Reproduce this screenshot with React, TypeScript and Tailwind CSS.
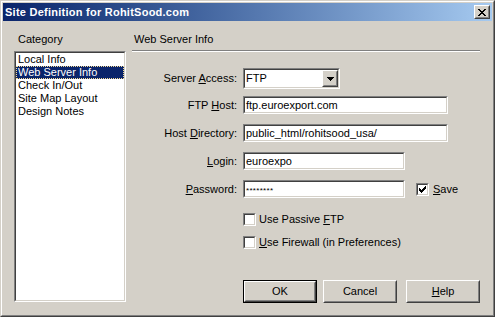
import React from "react";

const px = (rows: string[], color = "#000") =>
  rows.flatMap((row, y) =>
    row.split("").map((c, x) =>
      c === "x" ? <rect key={`${x}-${y}`} x={x} y={y} width={1} height={1} fill={color} /> : null
    )
  );

function CloseGlyph() {
  return (
    <svg width="8" height="7" shapeRendering="crispEdges">
      {px(["xx....xx", ".xx..xx.", "..xxxx..", "...xx...", "..xxxx..", ".xx..xx.", "xx....xx"])}
    </svg>
  );
}

function ArrowGlyph() {
  return (
    <svg width="7" height="4" shapeRendering="crispEdges">
      {px(["xxxxxxx", ".xxxxx.", "..xxx..", "...x..."])}
    </svg>
  );
}

function CheckGlyph() {
  return (
    <svg width="7" height="7" shapeRendering="crispEdges">
      {px(["......x", ".....xx", "x...xxx", "xx.xxx.", "xxxxx..", ".xxx...", "..x...."])}
    </svg>
  );
}

function Sunken({ className, children }: { className: string; children?: React.ReactNode }) {
  return (
    <div className={`border border-t-[#808080] border-l-[#808080] border-b-white border-r-white ${className}`}>
      <div className="h-full border border-t-[#404040] border-l-[#404040] border-b-[#d4d0c8] border-r-[#d4d0c8] bg-white">
        {children}
      </div>
    </div>
  );
}

function Raised({ className, children }: { className: string; children?: React.ReactNode }) {
  return (
    <div className={`border border-t-white border-l-white border-b-[#404040] border-r-[#404040] ${className}`}>
      <div className="h-full flex items-center justify-center border border-t-[#d4d0c8] border-l-[#d4d0c8] border-b-[#808080] border-r-[#808080] bg-[#d4d0c8]">
        {children}
      </div>
    </div>
  );
}

function TextField({ width, value, textClass = "" }: { width: string; value: string; textClass?: string }) {
  return (
    <Sunken className={`${width} h-[18px]`}>
      <div className={`h-full flex items-center pl-px whitespace-nowrap ${textClass}`}>{value}</div>
    </Sunken>
  );
}

function Checkbox({ checked }: { checked?: boolean }) {
  return (
    <Sunken className="w-[13px] h-[13px] shrink-0">
      <div className="h-full flex items-center justify-center">{checked && <CheckGlyph />}</div>
    </Sunken>
  );
}

function Label({ children }: { children: React.ReactNode }) {
  return <div className="w-[105px] shrink-0 text-right mr-[6px] whitespace-nowrap">{children}</div>;
}

const categories = ["Local Info", "Web Server Info", "Check In/Out", "Site Map Layout", "Design Notes"];

export default function App() {
  return (
    <div className="w-[495px] h-[317px] bg-[#d4d0c8] border border-t-[#d4d0c8] border-l-[#d4d0c8] border-r-[#404040] border-b-[#404040] font-['Liberation_Sans',Arial,sans-serif] text-[11px] leading-[13px] text-black select-none">
      <div className="h-full flex flex-col border border-t-white border-l-white border-r-[#808080] border-b-[#808080] p-px">
        {/* title bar */}
        <div className="h-[18px] shrink-0 flex items-center justify-between pl-[2px] pr-[2px] bg-gradient-to-r from-[#0a246a] to-[#a6caf0]">
          <span className="text-white font-bold tracking-[0.25px] whitespace-nowrap">Site Definition for RohitSood.com</span>
          <Raised className="w-[16px] h-[14px]">
            <CloseGlyph />
          </Raised>
        </div>

        <div className="flex-1 flex">
          {/* category list */}
          <div className="ml-[11px] w-[112px] pt-[12px] flex flex-col">
            <div className="pl-[4px]">Category</div>
            <Sunken className="mt-[5px] h-[251px]">
              <div className="flex flex-col">
                {categories.map((c) =>
                  c === "Web Server Info" ? (
                    <div key={c} className="h-[13px] pl-px bg-[#0a246a] text-white border border-dotted border-[#f5db95] leading-[11px] whitespace-nowrap">
                      {c}
                    </div>
                  ) : (
                    <div key={c} className="h-[13px] pl-[2px] whitespace-nowrap">
                      {c}
                    </div>
                  )
                )}
              </div>
            </Sunken>
          </div>

          {/* settings */}
          <div className="ml-[6px] w-[348px] pt-[12px] flex flex-col">
            <div className="pl-[2px]">Web Server Info</div>
            <div className="mt-[4px] border-t border-b border-t-[#808080] border-b-white" />

            <div className="mt-[16px] flex items-center">
              <Label>
                Server <u>A</u>ccess:
              </Label>
              <Sunken className="w-[97px] h-[21px]">
                <div className="h-full flex items-center justify-between">
                  <span className="pl-px">FTP</span>
                  <Raised className="w-[16px] h-full">
                    <ArrowGlyph />
                  </Raised>
                </div>
              </Sunken>
            </div>

            <div className="mt-[7px] flex items-center">
              <Label>
                FTP <u>H</u>ost:
              </Label>
              <TextField width="w-[205px]" value="ftp.euroexport.com" />
            </div>

            <div className="mt-[10px] flex items-center">
              <Label>
                Host <u>D</u>irectory:
              </Label>
              <TextField width="w-[205px]" value="public_html/rohitsood_usa/" />
            </div>

            <div className="mt-[10px] flex items-center">
              <Label>
                <u>L</u>ogin:
              </Label>
              <TextField width="w-[162px]" value="euroexpo" />
            </div>

            <div className="mt-[10px] flex items-center">
              <Label>
                <u>P</u>assword:
              </Label>
              <TextField width="w-[162px]" value="********" textClass="text-[8px] items-start pt-[2px] tracking-[0.3px]" />
              <div className="ml-[11px] flex items-center gap-[4px]">
                <Checkbox checked />
                <span>
                  <u>S</u>ave
                </span>
              </div>
            </div>

            <div className="mt-[15px] pl-[111px] flex items-center gap-[3px]">
              <Checkbox />
              <span>
                Use Passive <u>F</u>TP
              </span>
            </div>

            <div className="mt-[10px] pl-[111px] flex items-center gap-[3px]">
              <Checkbox />
              <span>
                <u>U</u>se Firewall (in Preferences)
              </span>
            </div>

            <div className="mt-[31px] pl-[111px] flex">
              <div className="w-[75px] h-[23px] border border-black">
                <Raised className="w-full h-full">OK</Raised>
              </div>
              <Raised className="ml-[6px] w-[75px] h-[23px]">Cancel</Raised>
              <Raised className="ml-[9px] w-[75px] h-[23px]">
                <span>
                  <u>H</u>elp
                </span>
              </Raised>
            </div>
          </div>
        </div>
      </div>
    </div>
  );
}
